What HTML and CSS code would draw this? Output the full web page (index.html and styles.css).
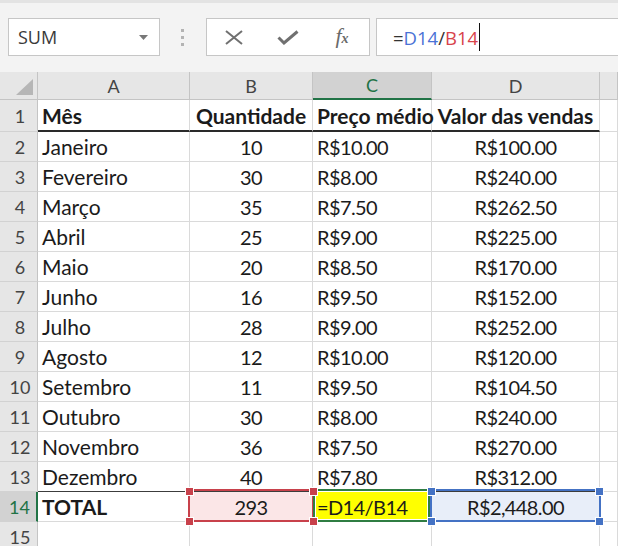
FILE: index.html
```html
<!DOCTYPE html>
<html lang="pt">
<head>
<meta charset="utf-8">
<title>Planilha</title>
<link rel="stylesheet" href="styles.css">
</head>
<body>
<div class="toolbar">
  <div class="namebox"><span>SUM</span><svg class="dd" width="9" height="5" viewBox="0 0 9 5"><path d="M0 0H9L4.5 5Z" fill="#787878"/></svg></div>
  <div class="grip"><i></i><i></i><i></i></div>
  <div class="fbuttons">
    <span class="fb"><svg width="18" height="15" viewBox="0 0 18 15"><path d="M1 1L17 14M17 1L1 14" stroke="#707070" stroke-width="2" fill="none"/></svg></span>
    <span class="fb"><svg width="22" height="15" viewBox="0 0 22 15"><path d="M1.5 7.5L7 13L20.5 1.5" stroke="#707070" stroke-width="3" fill="none"/></svg></span>
    <span class="fb fx">f<small>x</small></span>
  </div>
  <div class="finput"><span>=</span><span class="ref-d">D14</span><span>/</span><span class="ref-b">B14</span><span class="caret"></span></div>
</div>

<div class="sheet">
  <div class="ch corner"><svg width="38" height="28" viewBox="0 0 38 28"><path d="M33 7V23H16Z" fill="#b6b6b6"/></svg></div>
  <div class="ch">A</div><div class="ch">B</div><div class="ch sel">C</div><div class="ch">D</div><div class="ch"></div>

  <div class="rh">1</div><div class="c l b hr">Mês</div><div class="c m b hr">Quantidade</div><div class="c l b hr">Preço médio</div><div class="c m b hr">Valor das vendas</div><div class="c"></div>
  <div class="rh">2</div><div class="c l">Janeiro</div><div class="c m n">10</div><div class="c l n">R$10.00</div><div class="c m n">R$100.00</div><div class="c"></div>
  <div class="rh">3</div><div class="c l">Fevereiro</div><div class="c m n">30</div><div class="c l n">R$8.00</div><div class="c m n">R$240.00</div><div class="c"></div>
  <div class="rh">4</div><div class="c l">Março</div><div class="c m n">35</div><div class="c l n">R$7.50</div><div class="c m n">R$262.50</div><div class="c"></div>
  <div class="rh">5</div><div class="c l">Abril</div><div class="c m n">25</div><div class="c l n">R$9.00</div><div class="c m n">R$225.00</div><div class="c"></div>
  <div class="rh">6</div><div class="c l">Maio</div><div class="c m n">20</div><div class="c l n">R$8.50</div><div class="c m n">R$170.00</div><div class="c"></div>
  <div class="rh">7</div><div class="c l">Junho</div><div class="c m n">16</div><div class="c l n">R$9.50</div><div class="c m n">R$152.00</div><div class="c"></div>
  <div class="rh">8</div><div class="c l">Julho</div><div class="c m n">28</div><div class="c l n">R$9.00</div><div class="c m n">R$252.00</div><div class="c"></div>
  <div class="rh">9</div><div class="c l">Agosto</div><div class="c m n">12</div><div class="c l n">R$10.00</div><div class="c m n">R$120.00</div><div class="c"></div>
  <div class="rh">10</div><div class="c l">Setembro</div><div class="c m n">11</div><div class="c l n">R$9.50</div><div class="c m n">R$104.50</div><div class="c"></div>
  <div class="rh">11</div><div class="c l">Outubro</div><div class="c m n">30</div><div class="c l n">R$8.00</div><div class="c m n">R$240.00</div><div class="c"></div>
  <div class="rh">12</div><div class="c l">Novembro</div><div class="c m n">36</div><div class="c l n">R$7.50</div><div class="c m n">R$270.00</div><div class="c"></div>
  <div class="rh">13</div><div class="c l r13">Dezembro</div><div class="c m n r13">40</div><div class="c l n r13">R$7.80</div><div class="c m n r13">R$312.00</div><div class="c"></div>
  <div class="rh sel">14</div><div class="c l b">TOTAL</div><div class="c m n pink">293</div><div class="c l n yellow">=D14/B14</div><div class="c m n blue">R$2,448.00</div><div class="c"></div>
  <div class="rh">15</div><div class="c"></div><div class="c"></div><div class="c"></div><div class="c"></div><div class="c"></div>

  <div class="box box-red"></div>
  <div class="box box-blue"></div>
  <div class="box box-green"></div>
  <span class="h h-red" style="left:185px;top:415px"></span>
  <span class="h h-red" style="left:185px;top:445px"></span>
  <span class="h h-red" style="left:309px;top:415px"></span>
  <span class="h h-red" style="left:309px;top:445px"></span>
  <span class="h h-blue" style="left:427px;top:415px"></span>
  <span class="h h-blue" style="left:427px;top:445px"></span>
  <span class="h h-blue" style="left:595px;top:415px"></span>
  <span class="h h-blue" style="left:595px;top:445px"></span>
</div>
</body>
</html>
```

FILE: styles.css
```css
* { box-sizing: border-box; }
html, body { margin: 0; padding: 0; overflow: hidden; }
body { width: 618px; height: 546px; background: #ffffff; font-family: Lato, "Liberation Sans", sans-serif; }

.toolbar {
  height: 72px;
  background: #f3f3f3;
  border-top: 3px solid #e3e3e3;
  display: flex;
  align-items: flex-start;
  padding: 15px 0 0 8px;
}
.namebox {
  width: 152px;
  height: 38px;
  background: #fff;
  border: 1px solid #c6c6c6;
  display: flex;
  align-items: center;
  justify-content: space-between;
  padding: 0 11px 0 9px;
  font-family: "Open Sans", sans-serif;
  font-size: 18px;
  color: #3a3a3a;
}
.grip {
  width: 3px;
  margin: 11px 22px 0 21px;
  display: flex;
  flex-direction: column;
  gap: 4px;
}
.grip i { display: block; width: 3px; height: 3px; background: #b3b3b3; }
.fbuttons {
  width: 164px;
  height: 38px;
  background: #fff;
  border: 1px solid #c6c6c6;
  display: flex;
}
.fb {
  width: 54px;
  display: flex;
  align-items: center;
  justify-content: center;
}
.fx {
  font-family: "Liberation Serif", serif;
  font-style: italic;
  font-size: 22px;
  color: #6a6a6a;
  padding-bottom: 3px;
}
.fx small { font-size: 14px; font-weight: bold; margin-left: 0; position: relative; top: 3px; }
.finput {
  flex: 1;
  height: 38px;
  margin: 0 -4px 0 6px;
  background: #fff;
  border: 1px solid #c6c6c6;
  padding-left: 16px;
  display: flex;
  align-items: center;
  font-family: "Open Sans", sans-serif;
  font-size: 18.5px;
  color: #333;
}
.ref-d { color: #4a72d6; }
.ref-b { color: #d8434b; }
.caret { display: inline-block; width: 1px; height: 28px; background: #111; margin-left: 1px; }

.sheet {
  position: relative;
  display: grid;
  grid-template-columns: 38px 152px 123px 119px 168px 1fr;
  grid-template-rows: 28px 32px repeat(14, 30px);
}
.ch {
  background: #e6e6e6;
  border-right: 1px solid #c4c4c4;
  border-bottom: 1px solid #c4c4c4;
  display: flex;
  align-items: center;
  justify-content: center;
  font-size: 18px;
  color: #444;
}
.ch.corner { display: block; }
.ch.corner svg { display: block; }
.ch.sel { background: #d2d2d2; color: #217346; border-bottom: 2px solid #217346; }
.rh {
  background: #e6e6e6;
  border-right: 1px solid #c4c4c4;
  border-bottom: 1px solid #d2d2d2;
  display: flex;
  align-items: center;
  justify-content: center;
  padding-left: 3px;
  font-size: 18px;
  color: #444;
}
.rh.sel { background: #d2d2d2; color: #217346; border-right: 2px solid #217346; }
.c {
  border-right: 1px solid #dadada;
  border-bottom: 1px solid #dadada;
  display: flex;
  align-items: center;
  white-space: nowrap;
  font-size: 21px;
  color: #1b1b1b;
  padding: 0 4px;
}
.c.n { font-size: 20px; letter-spacing: -0.6px; }
.c.l { justify-content: flex-start; }
.c.m { justify-content: center; }
.c.b { font-weight: bold; }
.c.hr { border-bottom: 2px solid #2a2a2a; }
.c.r13 { border-bottom-color: #3c3c3c; }
.pink { background: #fbe6e7; }
.yellow { background: #ffff00; }
.blue { background: #e8eef9; }

.box { position: absolute; top: 417px; height: 33px; border: 2px solid; }
.box-red { left: 188px; width: 126px; border-color: #c8414b; }
.box-blue { left: 430px; width: 171px; border-color: #4472c4; }
.box-green { left: 313px; width: 117px; border-color: #2f7d43; box-shadow: inset 0 0 0 1px #fff; }
.h { position: absolute; width: 9px; height: 9px; border: 1px solid #fff; }
.h-red { background: #c8414b; }
.h-blue { background: #4472c4; }
```
